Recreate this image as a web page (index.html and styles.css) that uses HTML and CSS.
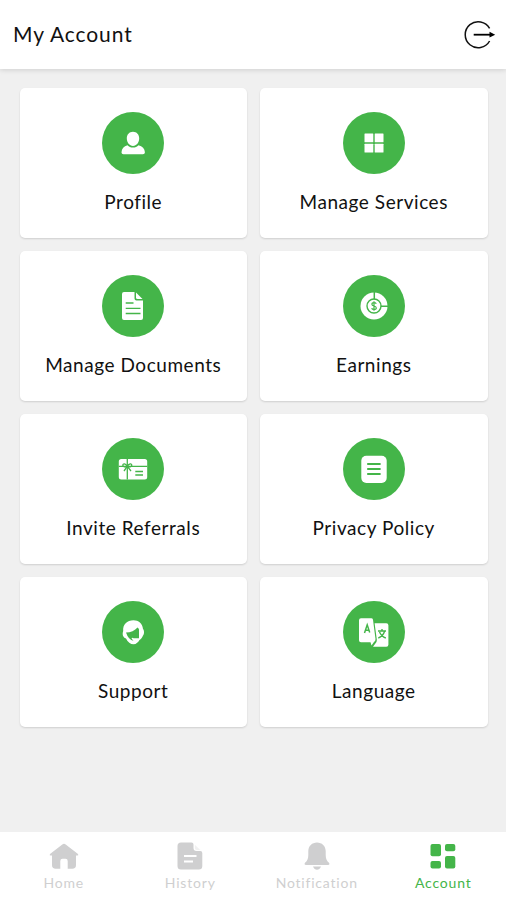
FILE: index.html
```html
<!DOCTYPE html>
<html lang="en">
<head>
  <meta charset="UTF-8" />
  <meta name="viewport" content="width=device-width, initial-scale=1.0"/>
  <title>My Account</title>
  <link rel="stylesheet" href="styles.css">
</head>

<body>
  <header>
    <h1>My Account</h1>
    <svg class="logout" viewBox="0 0 36 30">
      <path d="M27.6 8.4A13 13 0 1 0 27.6 21" fill="none" stroke="#111" stroke-width="1.5"/>
      <path d="M11.7 14.7H29" stroke="#000" stroke-width="1.8"/>
      <path d="M27.5 11.8L33.2 14.7L27.5 17.6Z"/>
    </svg>
  </header>

  <!-- Menu cards -->
  <main class="menu">
    <a class="card">
      <span class="circle">
        <svg viewBox="0 0 30 30" fill="#fff">
          <path d="M15 3.7c3.7 0 6.2 2.8 6.2 6.6 0 4.2-2.7 7.7-6.2 7.7s-6.2-3.5-6.2-7.7c0-3.8 2.5-6.6 6.2-6.6z"/>
          <path d="M9.5 17.2c1.5 1.5 3.2 2.3 5.5 2.3s4-.8 5.5-2.3c3.9.9 6.2 3.3 6.4 7.1 0 1.3-.8 2-2 2H5.5c-1.2 0-2-.7-2-2 .2-3.8 2.3-6.2 6-7.1z"/>
        </svg>
      </span>
      <span class="label">Profile</span>
    </a>
    <a class="card">
      <span class="circle">
        <svg viewBox="0 0 30 30" fill="#fff">
          <rect x="5.5" y="5.6" width="8.8" height="8.7" rx=".5"/>
          <rect x="15.7" y="5.6" width="8.8" height="8.7" rx=".5"/>
          <rect x="5.5" y="15.7" width="8.8" height="8.7" rx=".5"/>
          <rect x="15.7" y="15.7" width="8.8" height="8.7" rx=".5"/>
        </svg>
      </span>
      <span class="label">Manage Services</span>
    </a>
    <a class="card">
      <span class="circle">
        <svg viewBox="0 0 30 30" fill="#fff">
          <path d="M6 1H16.5V7.5Q16.5 9.5 18.5 9.5H25V27Q25 29 23 29H6Q4 29 4 27V3Q4 1 6 1Z"/>
          <path d="M18 1.5L24.5 8H19.5Q18 8 18 6.5Z"/>
          <path d="M7.7 12H15.5M7.7 17.3H22.5M7.7 22.5H22.5" stroke="#44b549" stroke-width="1.3"/>
        </svg>
      </span>
      <span class="label">Manage Documents</span>
    </a>
    <a class="card">
      <span class="circle">
        <svg viewBox="0 0 30 30">
          <circle cx="15" cy="15" r="13.5" fill="#fff"/>
          <path d="M15.3 1V8.5M22 15.3H29" stroke="#44b549" stroke-width="1.5"/>
          <circle cx="15" cy="15" r="7" fill="none" stroke="#44b549" stroke-width="1.4"/>
          <path d="M17.3 12.7Q16.7 11.7 15 11.7Q12.9 11.7 12.9 13.3Q12.9 14.5 15 15Q17.3 15.5 17.3 16.9Q17.3 18.4 15 18.4Q13.1 18.4 12.6 17.2M15 10.3V19.8" fill="none" stroke="#44b549" stroke-width="1.2"/>
        </svg>
      </span>
      <span class="label">Earnings</span>
    </a>
    <a class="card">
      <span class="circle">
        <svg viewBox="0 0 30 30">
          <rect x=".8" y="5" width="28.4" height="20.5" rx="2.5" fill="#fff"/>
          <path d="M9.3 5V25.5M.8 12.4H29.2" stroke="#44b549" stroke-width="1.3"/>
          <path d="M9.3 12.4C7.5 9.3 4.8 9.2 4.8 11.3C4.8 13.2 7.5 13.2 9.3 12.4C11.1 9.3 13.8 9.2 13.8 11.3C13.8 13.2 11.1 13.2 9.3 12.4L6 17M9.3 12.4L13 17" fill="none" stroke="#44b549" stroke-width="1.3"/>
          <path d="M17.3 17.5H25M17.3 21H25" stroke="#44b549" stroke-width="1.4"/>
        </svg>
      </span>
      <span class="label">Invite Referrals</span>
    </a>
    <a class="card">
      <span class="circle">
        <svg viewBox="0 0 30 30">
          <rect x="2.3" y="1.7" width="25.4" height="27.2" rx="5" fill="#fff"/>
          <path d="M8.2 10H21.6M8.2 15H21.6M8.2 20H21.6" stroke="#44b549" stroke-width="1.9"/>
        </svg>
      </span>
      <span class="label">Privacy Policy</span>
    </a>
    <a class="card">
      <span class="circle">
        <svg viewBox="0 0 30 30">
          <path d="M15.5 3.3C20.5 3.3 24.5 6.5 25 12C26.3 13 26.5 17.2 25 18.5C24.2 20.5 23 22.2 21.5 23C20.5 24.8 18.3 27.3 15.5 27.3C12.5 27.3 9.8 25.4 8 21.5C5 20.5 4 17.5 5.2 14C4.6 7.5 9 3.3 15.5 3.3Z" fill="#fff"/>
          <path d="M8 15.5C12.5 15.3 17 13.6 19.5 10.4Q20.5 10.7 21 12.5V21.3H15.5Q14.5 20.3 13.5 21.5L15.5 23.8Q10.5 23 8 15.5Z" fill="#44b549"/>
        </svg>
      </span>
      <span class="label">Support</span>
    </a>
    <a class="card">
      <span class="circle">
        <svg viewBox="0 0 30 30">
          <path d="M2 1.3H12.3Q13.6 1.3 14 2.7L16.5 22Q16.7 24 15 25L12.5 28.5L11.5 25.3H2Q0 25.3 0 23.3V3.3Q0 1.3 2 1.3Z" fill="#fff"/>
          <path d="M15.6 6.3H27.3Q29.4 6.3 29.4 8.3V27.7Q29.4 29.7 27.3 29.7H14L17.3 25.3Q18 24.3 17.8 22.5Z" fill="#fff"/>
          <path d="M5.5 16L8.2 7.8L10.7 15.5M6.3 13.3H10" fill="none" stroke="#44b549" stroke-width="1.5"/>
          <path d="M19 14H27M23 12V14M25.5 14.5Q24 19.3 19.3 21M20.5 15Q22.5 19.5 26.8 21" fill="none" stroke="#44b549" stroke-width="1.4"/>
        </svg>
      </span>
      <span class="label">Language</span>
    </a>
  </main>

  <!-- Bottom navigation -->
  <nav>
    <a class="tab">
      <svg viewBox="0 0 30 28">
        <path d="M13.3 2.4Q15 1 16.7 2.4L29 12Q30 13.5 28.3 13.6H27V23Q27 26.8 23.3 26.8H18.7V19Q18.7 16.8 16.5 16.8H13.5Q11.3 16.8 11.3 19V26.8H6.7Q3 26.8 3 23V13.6H1.7Q0 13.5 1 12Z"/>
      </svg>
      <span>Home</span>
    </a>
    <a class="tab">
      <svg viewBox="0 0 30 28">
        <path d="M6 .5H16.5Q18.5 .5 18.5 2.5V6Q18.5 9 21.5 9H25.300Q27.3 9 27.3 11V24Q27.3 27.5 23.800 27.5H6Q2.500 27.5 2.500 24V4Q2.500 .5 6 .5Z"/>
        <path d="M19.800 2.800L25.300 8H21.800Q19.800 8 19.800 6Z" opacity=".3"/>
        <path d="M9 14H21.500M9 19.500H18" stroke="#fff" stroke-width="2.200"/>
      </svg>
      <span>History</span>
    </a>
    <a class="tab">
      <svg viewBox="0 0 30 28">
        <path d="M15 .5C20 .5 23.5 4 23.7 9V13C23.7 17 25 19 27 20.8Q28.3 22.800 26 23H4Q1.700 22.800 3 20.800C5 19 6.300 17 6.300 13V9C6.500 4 10 .5 15 .5ZM11 24.500H19Q17.500 27.800 15 27.800Q12.500 27.800 11 24.500Z"/>
      </svg>
      <span>Notification</span>
    </a>
    <a class="tab active">
      <svg viewBox="0 0 30 28">
        <rect x="2.5" y="2" width="10.5" height="12.3" rx="2"/>
        <rect x="17" y="2" width="10.3" height="7.3" rx="2"/>
        <rect x="2.5" y="19" width="10.5" height="7.6" rx="2"/>
        <rect x="17" y="14" width="10.3" height="12.6" rx="2"/>
      </svg>
      <span>Account</span>
    </a>
  </nav>
</body>
</html>
```
FILE: styles.css
```css
* {
  box-sizing: border-box;
}

body {
  margin: 0;
  height: 100vh;
  display: flex;
  flex-direction: column;
  font-family: Lato, sans-serif;
  background: #f0f0f0;
  color: #111;
  overflow: hidden;
}

header {
  height: 69px;
  padding: 0 8px 0 13px;
  display: flex;
  align-items: center;
  justify-content: space-between;
  background: #fff;
  box-shadow: 0 1px 5px rgba(0, 0, 0, 0.14);
}

h1 {
  margin: 0 0 2px;
  font-size: 21px;
  font-weight: 400;
  letter-spacing: 0.9px;
}

.logout {
  width: 36px;
  height: 30px;
}

/* Menu cards */
.menu {
  flex: 1;
  display: grid;
  grid-template-columns: 1fr 1fr;
  grid-auto-rows: 150px;
  gap: 13px;
  padding: 19.4px 18.5px 0 19.5px;
}

.card {
  display: flex;
  flex-direction: column;
  align-items: center;
  padding-top: 24px;
  background: #fff;
  border-radius: 5px;
  box-shadow: 0 1px 2px rgba(0, 0, 0, 0.14);
}

.circle {
  width: 62px;
  height: 62px;
  display: flex;
  align-items: center;
  justify-content: center;
  border-radius: 50%;
  background: #44b549;
}

.circle svg {
  width: 30px;
  height: 30px;
}

.label {
  margin-top: 16px;
  font-size: 19px;
  line-height: 24px;
  letter-spacing: 0.55px;
  white-space: nowrap;
}

/* Bottom navigation */
nav {
  height: 68px;
  display: flex;
  background: #fff;
}

.tab {
  flex: 1;
  display: flex;
  flex-direction: column;
  align-items: center;
  padding: 10px 0 0 1px;
  color: #cfcfd0;
  font-size: 14px;
  line-height: 18px;
  letter-spacing: 0.8px;
}

.tab svg {
  width: 30px;
  height: 28px;
  margin-bottom: 4px;
  fill: currentColor;
}

.tab.active {
  color: #44b549;
}
```
